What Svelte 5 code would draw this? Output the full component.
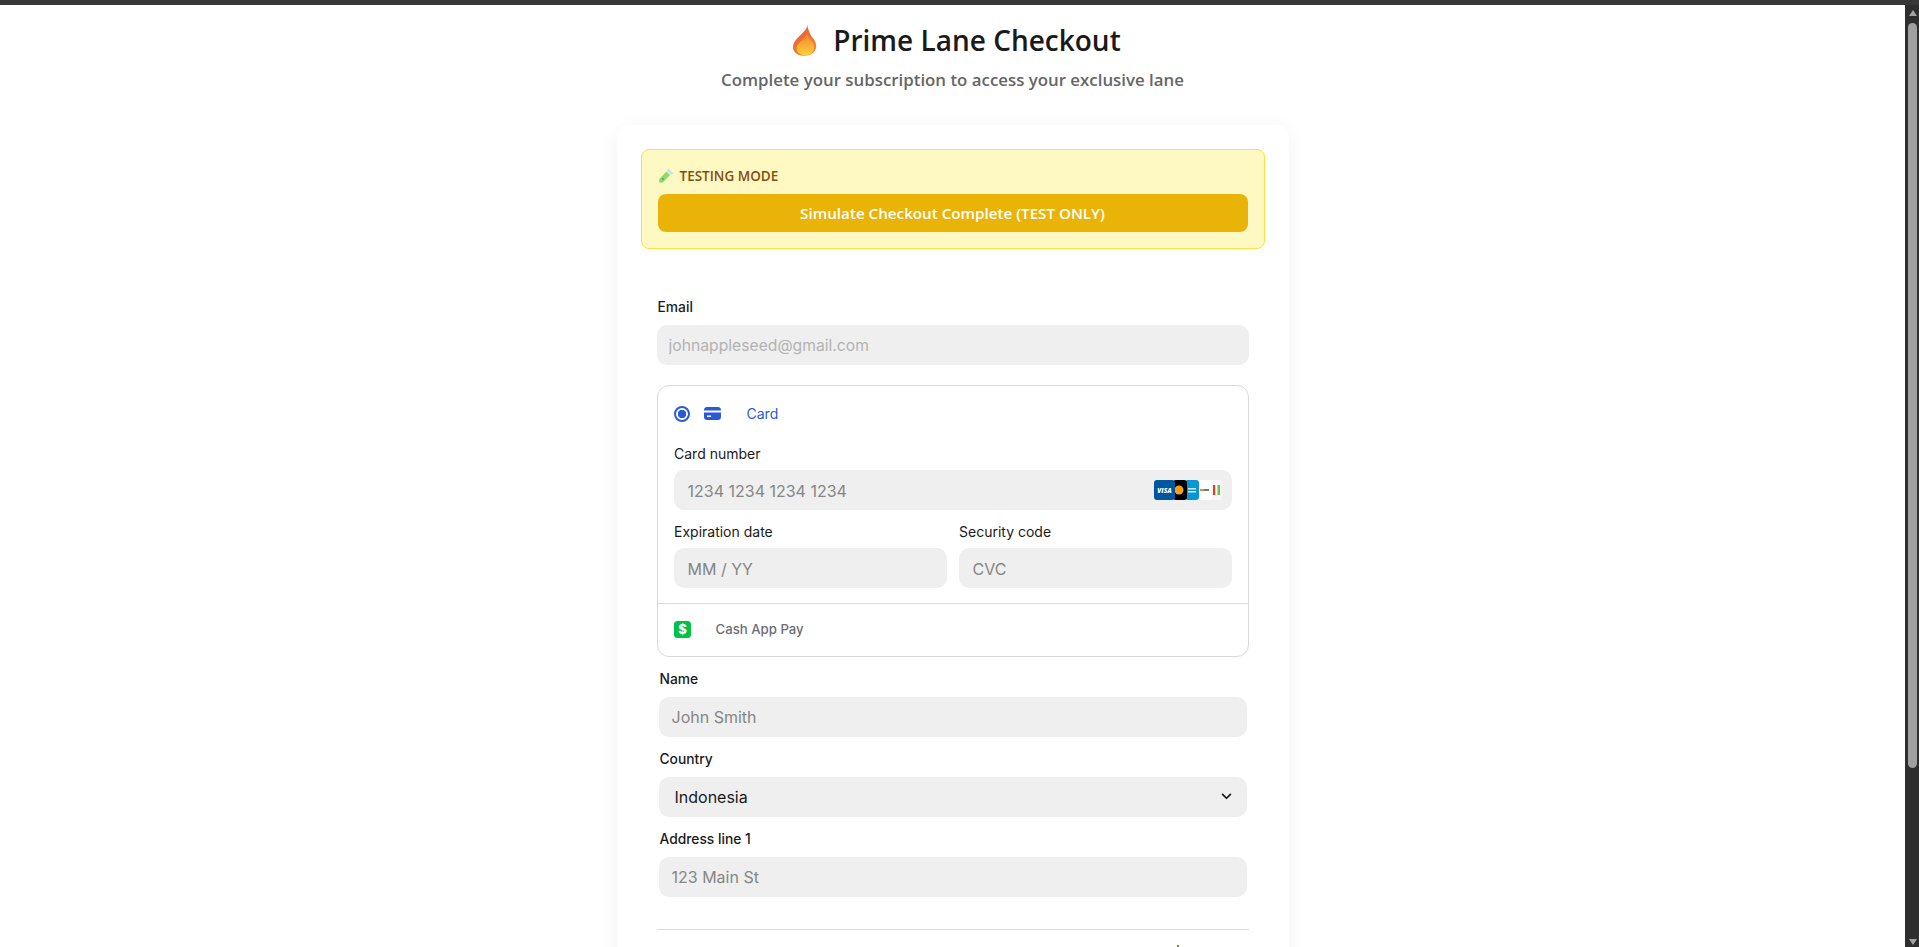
<script lang="ts">
  let country = $state('Indonesia');
</script>

<div class="shell">
  <div class="topbar"></div>
  <div class="viewport">
    <main class="page">
      <header class="head">
        <h1>
          <svg class="flame" viewBox="0 0 24 32" aria-hidden="true">
            <defs>
              <linearGradient id="flameOuter" x1="0" y1="0" x2="0.6" y2="1">
                <stop offset="0" stop-color="#e8503a" />
                <stop offset="1" stop-color="#f28a30" />
              </linearGradient>
              <linearGradient id="flameInner" x1="0.5" y1="0" x2="0.5" y2="1">
                <stop offset="0" stop-color="#f9812a" />
                <stop offset="1" stop-color="#fdd23e" />
              </linearGradient>
            </defs>
            <path fill="url(#flameOuter)" d="M14.500 0.500C15 5 12 7 7 12 3 16 0.500 19 0.500 23 0.500 28.500 5.500 31.800 12 31.800S23.700 28 23.700 22C23.700 17 20.500 14.500 18.800 12 17 9 15.500 5 14.500 0.500Z" />
            <path fill="url(#flameInner)" d="M14.500 9.500C15 14 21.500 17 21.500 23.500 21.500 28 17.500 31.400 12.500 31.400 7.500 31.400 4 28 4 24 4 19.500 9 17.500 11 15 12.800 13 14 11.500 14.500 9.500Z" />
          </svg>
          <span>Prime Lane Checkout</span>
        </h1>
        <p>Complete your subscription to access your exclusive lane</p>
      </header>

      <section class="card">
        <div class="banner">
          <div class="banner-title">
            <svg class="tube" viewBox="0 0 16 16" aria-hidden="true">
              <path fill="#bfe6f5" d="M10.500 0.500 15.500 5.500 13 7 9 3Z" />
              <path fill="#8edb6a" d="M8.500 3.500 12 7 5.500 13.800C4.500 15 2.800 15.200 1.600 14.200 0.600 13 0.800 11.500 2 10.300Z" />
              <circle cx="5" cy="11" r="0.900" fill="#4fa83d" />
            </svg>
            <span>TESTING MODE</span>
          </div>
          <button class="simulate" type="button">Simulate Checkout Complete (TEST ONLY)</button>
        </div>

        <form class="form">
          <div class="field">
            <label for="email">Email</label>
            <input id="email" class="input email" placeholder="johnappleseed@gmail.com" disabled />
          </div>

          <div class="payment">
            <div class="method active">
              <span class="radio"></span>
              <svg class="method-icon" viewBox="0 0 17 13" aria-hidden="true">
                <path fill="#2a5bd7" d="M0 3C0 1.300 1.300 0 3 0H14C15.700 0 17 1.300 17 3V3.500H0ZM0 5.500H17V10C17 11.700 15.700 13 14 13H3C1.300 13 0 11.700 0 10ZM3 8.500V10H7V8.500Z" />
              </svg>
              <span>Card</span>
            </div>
            <div class="card-fields">
              <div class="stripe-field">
                <label for="cardnum">Card number</label>
                <div class="with-logos">
                  <input id="cardnum" class="input" placeholder="1234 1234 1234 1234" />
                  <svg class="logos" viewBox="0 0 68 20" aria-hidden="true">
                    <rect x="56" width="12" height="20" rx="2" fill="#f6f6f6" />
                    <rect x="59" y="5" width="2.500" height="10" fill="#e0402e" />
                    <rect x="61.500" y="5" width="2" height="10" fill="#fff" />
                    <rect x="63.500" y="5" width="2.500" height="10" fill="#6fbf4a" />
                    <rect x="43" width="15" height="20" rx="3" fill="#fff" />
                    <rect x="46" y="9" width="4" height="2" fill="#e8892b" />
                    <rect x="50" y="9" width="5" height="2" fill="#777" />
                    <rect x="31" width="14" height="20" rx="3" fill="#0a96d6" />
                    <rect x="34" y="8" width="8" height="1.500" fill="#cfeaf7" />
                    <rect x="34" y="11" width="8" height="1.500" fill="#cfeaf7" />
                    <rect x="19" width="14" height="20" rx="3" fill="#000" />
                    <circle cx="25" cy="10" r="4.500" fill="#f79e1b" />
                    <rect width="21" height="20" rx="3" fill="#00579f" />
                    <text x="10.500" y="12.500" class="visa">VISA</text>
                  </svg>
                </div>
              </div>
              <div class="two">
                <div class="stripe-field">
                  <label for="exp">Expiration date</label>
                  <input id="exp" class="input" placeholder="MM / YY" />
                </div>
                <div class="stripe-field">
                  <label for="cvc">Security code</label>
                  <input id="cvc" class="input" placeholder="CVC" />
                </div>
              </div>
            </div>
            <div class="method cash">
              <svg class="method-icon tall" viewBox="0 0 17 17" aria-hidden="true">
                <rect width="17" height="17" rx="3.500" fill="#00c244" />
                <text x="8.500" y="13" class="dollar">$</text>
              </svg>
              <span>Cash App Pay</span>
            </div>
          </div>

          <div class="address">
            <div class="field">
              <label for="name">Name</label>
              <input id="name" class="input" placeholder="John Smith" />
            </div>
            <div class="field">
              <label for="country">Country</label>
              <div class="select-wrap">
                <select id="country" class="input select" bind:value={country}>
                  <option>Indonesia</option>
                  <option>United States</option>
                </select>
                <svg class="chevron" viewBox="0 0 12 8" aria-hidden="true">
                  <path d="M1.500 1.500 6 6 10.500 1.500" fill="none" stroke="#1a1a1a" stroke-width="2" stroke-linecap="round" stroke-linejoin="round" />
                </svg>
              </div>
            </div>
            <div class="field">
              <label for="line1">Address line 1</label>
              <input id="line1" class="input" placeholder="123 Main St" />
            </div>
          </div>

          <div class="summary">
            <span class="speck"></span>
          </div>
        </form>
      </section>
    </main>

    <div class="scrollbar" aria-hidden="true">
      <span class="arrow up"></span>
      <div class="track"><div class="thumb"></div></div>
      <span class="arrow down"></span>
    </div>
  </div>
</div>

<style>
  :global(body) {
    margin: 0;
    background: #fff;
  }
  .shell {
    height: 947px;
    display: flex;
    flex-direction: column;
    overflow: hidden;
  }
  .topbar {
    height: 5px;
    background: #383838;
    flex: none;
  }
  .viewport {
    flex: 1;
    min-height: 0;
    display: flex;
  }
  .page {
    flex: 1;
    min-width: 0;
    overflow: hidden;
    display: flex;
    flex-direction: column;
    align-items: center;
    font-family: 'Open Sans', 'Noto Sans', sans-serif;
  }
  .head {
    padding-top: 15px;
    text-align: center;
  }
  h1 {
    margin: 0;
    padding-left: 8px;
    height: 40px;
    display: flex;
    align-items: center;
    justify-content: center;
    gap: 16px;
    font-size: 28px;
    line-height: 40px;
    font-weight: 600;
    color: #1a1a1a;
  }
  .flame {
    width: 25px;
    height: 32px;
    flex: none;
  }
  .head p {
    margin: 8px 0 0;
    font-size: 16.850px;
    line-height: 24px;
    font-weight: 600;
    color: #666;
  }
  .card {
    margin-top: 33px;
    width: 672px;
    box-sizing: border-box;
    padding: 24px 24px 0;
    background: #fff;
    border-radius: 12px;
    box-shadow: 0 4px 20px rgba(0, 0, 0, 0.05);
  }
  .banner {
    box-sizing: border-box;
    height: 100px;
    padding: 16px;
    background: #fef9c3;
    border: 1px solid #fde047;
    border-radius: 8px;
  }
  .banner-title {
    height: 20px;
    margin-bottom: 8px;
    display: flex;
    align-items: center;
    gap: 6px;
    font-size: 13.500px;
    font-weight: 600;
    color: #854d0e;
  }
  .tube {
    width: 16px;
    height: 16px;
    flex: none;
  }
  .simulate {
    display: block;
    width: 100%;
    height: 38px;
    border: 0;
    border-radius: 8px;
    background: #eab308;
    color: #fff;
    font: 600 15.200px 'Open Sans', 'Noto Sans', sans-serif;
  }
  .form {
    padding: 49px 16px 0;
    font-family: Inter, 'Liberation Sans', sans-serif;
  }
  .field {
    display: grid;
    gap: 9px;
  }
  .field label {
    padding-left: 1px;
    font-size: 13.800px;
    line-height: 18px;
    font-weight: 450;
    color: #1a1a1a;
  }
  .input {
    display: block;
    width: 100%;
    height: 40px;
    box-sizing: border-box;
    padding: 0 14px;
    border: 0;
    border-radius: 10px;
    background: #efefef;
    font: 400 16px Inter, 'Liberation Sans', sans-serif;
    color: #30313d;
    outline: none;
  }
  .input::placeholder {
    color: #868686;
    opacity: 1;
  }
  .input.email {
    padding: 0 12px;
    font-size: 15.700px;
  }
  .input.email::placeholder {
    color: #b3b3b3;
  }
  .payment {
    margin-top: 20px;
    box-sizing: border-box;
    height: 272px;
    border: 1px solid #d9d9d9;
    border-radius: 12px;
    display: flex;
    flex-direction: column;
  }
  .method {
    display: flex;
    align-items: center;
    padding: 0 16px;
    font-size: 13.200px;
    font-weight: 500;
  }
  .method.active {
    height: 55px;
    gap: 14px;
    font-size: 14px;
    font-weight: 400;
    color: #2a5bd7;
  }
  .method.active span:last-child {
    margin-left: 12px;
  }
  .radio {
    width: 16px;
    height: 16px;
    box-sizing: border-box;
    border: 2px solid #2a5bd7;
    border-radius: 50%;
    background: radial-gradient(circle, #2a5bd7 0 4px, #fff 4.500px);
    flex: none;
  }
  .method-icon {
    width: 17px;
    height: 13px;
    flex: none;
  }
  .method-icon.tall {
    height: 17px;
  }
  .dollar {
    font: 800 13px Inter, sans-serif;
    fill: #fff;
    text-anchor: middle;
  }
  .card-fields {
    padding: 5px 16px 15px;
    display: grid;
    gap: 14px;
    border-bottom: 1px solid #d9d9d9;
  }
  .card-fields .input {
    padding-top: 2px;
  }
  .stripe-field {
    display: grid;
    gap: 8px;
  }
  .stripe-field label {
    padding-left: 0.500px;
    font-size: 14px;
    line-height: 16px;
    color: #1a1a1a;
  }
  .with-logos {
    position: relative;
  }
  .logos {
    position: absolute;
    right: 10px;
    top: 10px;
    width: 68px;
    height: 20px;
  }
  .visa {
    font: italic 800 6.500px 'Open Sans', sans-serif;
    fill: #fff;
    text-anchor: middle;
  }
  .two {
    display: grid;
    grid-template-columns: 1fr 1fr;
    gap: 12px;
  }
  .method.cash {
    flex: 1;
    gap: 25px;
    padding-bottom: 2px;
    color: #6d6e78;
  }
  .address {
    margin: 13px 2px 0;
    display: grid;
    gap: 13px;
  }
  .address input {
    padding: 0 13px;
  }
  .select-wrap {
    position: relative;
  }
  .select {
    appearance: none;
    padding: 0 16px;
    color: #1a1a1a;
  }
  .chevron {
    position: absolute;
    right: 15px;
    top: 16px;
    width: 11px;
    height: 7px;
    pointer-events: none;
  }
  .summary {
    margin-top: 32px;
    border-top: 1px solid #dcdcdc;
    height: 60px;
    display: flex;
    justify-content: flex-end;
  }
  .speck {
    width: 2px;
    height: 2px;
    margin: 15px 70px 0 0;
    background: #7a8a6a;
  }
  .scrollbar {
    width: 14px;
    flex: none;
    background: #2e2e2e;
    display: flex;
    flex-direction: column;
    align-items: center;
  }
  .arrow {
    width: 0;
    height: 0;
    flex: none;
    border-left: 4.500px solid transparent;
    border-right: 4.500px solid transparent;
  }
  .arrow.up {
    margin: 5px 0 0 1px;
    border-bottom: 6px solid #a3a3a3;
  }
  .arrow.down {
    margin: 0 0 2px 1px;
    border-top: 6px solid #a3a3a3;
  }
  .track {
    flex: 1;
    width: 100%;
    padding-top: 7px;
    box-sizing: border-box;
    display: flex;
    justify-content: center;
  }
  .thumb {
    width: 9px;
    height: 745px;
    margin-left: 1px;
    background: #a0a0a0;
    border-radius: 5px;
  }
</style>
